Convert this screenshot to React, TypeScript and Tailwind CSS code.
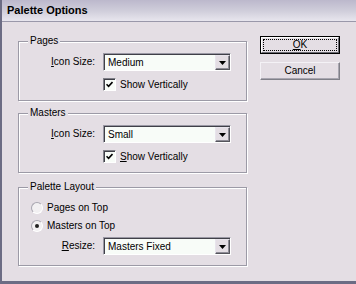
import React from 'react';

const FONT = { fontFamily: '"Liberation Sans", Arial, sans-serif' };

const GroupBox: React.FC<{ title: string; className?: string; children: React.ReactNode }> = ({
  title,
  className = '',
  children,
}) => (
  <div
    className={`relative w-[229px] border border-[#9c9aa6] shadow-[inset_1px_1px_0_#ffffff,1px_1px_0_#ffffff] ${className}`}
  >
    <span className="absolute left-[9px] top-[-7px] bg-[#e4dee4] px-[2px] text-[10px] leading-[12px]">
      {title}
    </span>
    {children}
  </div>
);

const Select: React.FC<{ value: string }> = ({ value }) => (
  <div className="flex h-[18px] w-[128px] border border-t-[#9a98a4] border-l-[#9a98a4] border-b-white border-r-white">
    <div className="flex flex-1 border-t border-l border-[#404048] bg-[#f8fcf8]">
      <span className="flex-1 pl-[3px] text-[10px] leading-[15px]">{value}</span>
      <div className="flex w-[15px] items-center justify-center border border-t-[#e8e4ec] border-l-[#e8e4ec] border-b-[#55555c] border-r-[#55555c] bg-[#e4dee4] shadow-[inset_-1px_-1px_0_#8e8c96]">
        <svg width="7" height="4" viewBox="0 0 7 4">
          <path d="M0 0h7L3.5 4z" fill="#000" />
        </svg>
      </div>
    </div>
  </div>
);

const Checkbox: React.FC<{ label: React.ReactNode }> = ({ label }) => (
  <div className="flex h-[13px] items-center gap-[4px]">
    <div className="flex h-[13px] w-[13px] items-center justify-center border border-t-[#808088] border-l-[#808088] border-b-white border-r-white bg-[#f8fcf8] shadow-[inset_1px_1px_0_#404048]">
      <svg width="7" height="7" viewBox="0 0 7 7">
        <path d="M0.5 3.2 L2.6 5.4 L6.5 1" stroke="#000" strokeWidth="1.6" fill="none" />
      </svg>
    </div>
    <span className="text-[10px] leading-[12px]">{label}</span>
  </div>
);

const Radio: React.FC<{ label: string; checked?: boolean }> = ({ label, checked }) => (
  <div className="flex h-[13px] items-center gap-[4px]">
    <div className="flex h-[12px] w-[12px] items-center justify-center rounded-full border border-t-[#a8a6b0] border-l-[#a8a6b0] border-b-white border-r-white bg-[#f2f0f2]">
      {checked && <div className="h-[4px] w-[4px] rounded-full bg-[#202020]" />}
    </div>
    <span className="text-[10px] leading-[12px]">{label}</span>
  </div>
);

const Row: React.FC<{ label: React.ReactNode; value: string }> = ({ label, value }) => (
  <div className="flex items-center">
    <span className="w-[77px] pr-[1px] text-right text-[10px] leading-[12px]">{label}</span>
    <span className="w-[7px]" />
    <Select value={value} />
  </div>
);

export default function App() {
  return (
    <div
      style={FONT}
      className="flex h-[284px] w-[356px] flex-col overflow-hidden border-b-[3px] border-l-2 border-[#6c6c84] bg-[#e4dee4] text-black"
    >
      <div className="flex h-[22px] shrink-0 items-center border-b border-[#9a98aa] bg-gradient-to-b from-[#bcb8cc] via-[#cfcdda] to-[#e8e6ee] pl-[5px]">
        <span className="text-[11px] font-bold leading-[13px]">Palette Options</span>
      </div>

      <div className="flex items-start pl-[16px]">
        <div className="flex flex-col pt-[19px]">
          <GroupBox title="Pages">
            <div className="pt-[11px] pb-[9px]">
              <Row
                label={
                  <>
                    <u>I</u>con Size:
                  </>
                }
                value="Medium"
              />
              <div className="mt-[7px] pl-[84px]">
                <Checkbox label="Show Vertically" />
              </div>
            </div>
          </GroupBox>

          <GroupBox title="Masters" className="mt-[12px]">
            <div className="pt-[11px] pb-[9px]">
              <Row
                label={
                  <>
                    <u>I</u>con Size:
                  </>
                }
                value="Small"
              />
              <div className="mt-[7px] pl-[84px]">
                <Checkbox
                  label={
                    <>
                      <u>S</u>how Vertically
                    </>
                  }
                />
              </div>
            </div>
          </GroupBox>

          <GroupBox title="Palette Layout" className="mt-[14px]">
            <div className="pt-[13px] pb-[10px]">
              <div className="pl-[12px]">
                <Radio label="Pages on Top" />
              </div>
              <div className="mt-[5px] pl-[12px]">
                <Radio label="Masters on Top" checked />
              </div>
              <div className="mt-[5px]">
                <Row
                  label={
                    <>
                      <u>R</u>esize:
                    </>
                  }
                  value="Masters Fixed"
                />
              </div>
            </div>
          </GroupBox>
        </div>

        <div className="ml-[13px] flex flex-col pt-[14px]">
          <button className="flex h-[18px] w-[80px] border border-black p-0 text-[10px]">
            <div className="flex flex-1 border border-t-white border-l-white border-b-[#6a6a72] border-r-[#6a6a72] p-[1px]">
              <div className="flex flex-1 items-center justify-center border border-dotted border-black leading-[10px]">
                <span>
                  <u>O</u>K
                </span>
              </div>
            </div>
          </button>
          <button className="mt-[8px] flex h-[18px] w-[80px] items-center justify-center border border-t-[#f4f2f6] border-l-[#f4f2f6] border-b-[#808088] border-r-[#808088] p-0 text-[10px] leading-[12px] shadow-[inset_-1px_-1px_0_#a8a6b0]">
            Cancel
          </button>
        </div>
      </div>
    </div>
  );
}
